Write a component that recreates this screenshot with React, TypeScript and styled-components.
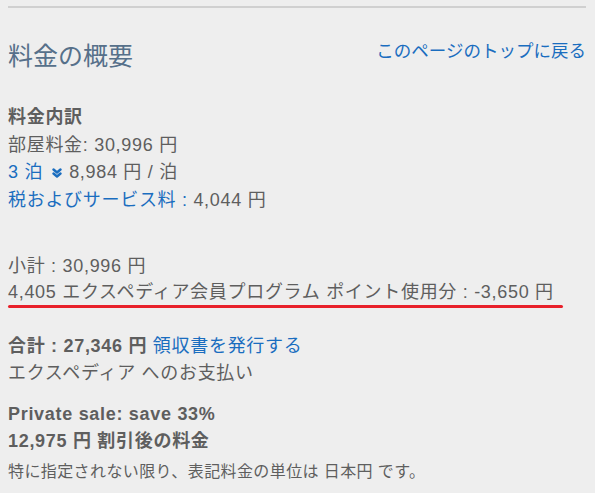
import React from 'react'
import styled, { createGlobalStyle } from 'styled-components'

const GlobalStyle = createGlobalStyle`
  body {
    margin: 0;
    background: #eeeeee;
    font-family: 'Liberation Sans', 'Noto Sans CJK JP', sans-serif;
    color: #5e5e5e;
  }
`

const Page = styled.div`
  padding: 0 9px 0 8px;
`

const Rule = styled.hr`
  margin: 6px 0 0;
  border: 0;
  border-top: 2px solid #d0d0d0;
`

const Header = styled.div`
  display: flex;
  justify-content: space-between;
  align-items: flex-start;
  margin-top: 33px;
`

const Title = styled.h2`
  margin: 0;
  font-size: 25px;
  line-height: 30px;
  font-weight: normal;
  color: #56708a;
`

const Link = styled.a<{ $size?: number }>`
  color: #1a6dbf;
  text-decoration: none;
  cursor: pointer;
  font-size: ${(p) => (p.$size ? `${p.$size}px` : 'inherit')};
`

const TopLink = styled(Link)`
  line-height: 20px;
`

const Block = styled.div<{ $gap: number; $lh?: number }>`
  margin-top: ${(p) => p.$gap}px;
  font-size: 18px;
  letter-spacing: 0.7px;
  line-height: ${(p) => p.$lh ?? 27}px;
`

const Line = styled.div<{ $bold?: boolean }>`
  font-weight: ${(p) => (p.$bold ? 'bold' : 'normal')};
  white-space: nowrap;
`

const MarkedLine = styled(Line)`
  position: relative;
  &::after {
    content: '';
    position: absolute;
    left: 0;
    bottom: -3px;
    width: 555px;
    height: 3.5px;
    border-radius: 2px;
    background: #e8202a;
  }
`

const Toggle = styled.span`
  display: inline-flex;
  vertical-align: middle;
  margin: -1px 7px 0 9px;
`

const Note = styled.p`
  margin: 5px 0 0;
  font-size: 16px;
  letter-spacing: 0.4px;
  line-height: 24px;
`

const ChevronsDown: React.FC = () => (
  <svg width="10" height="10" viewBox="0 0 10 10" fill="none">
    <path d="M1.5 1.5 L5 4.5 L8.5 1.5 M1.5 5.5 L5 8.5 L8.5 5.5" stroke="#1a6dbf" strokeWidth="2.4" strokeLinecap="round" strokeLinejoin="round" />
  </svg>
)

const App: React.FC = () => {
  return (
    <>
      <GlobalStyle />
      <Page>
        <Rule />
        <Header>
          <Title>料金の概要</Title>
          <TopLink $size={17.5}>このページのトップに戻る</TopLink>
        </Header>

        <Block $gap={33} $lh={27.5}>
          <Line $bold>料金内訳</Line>
          <Line>部屋料金: 30,996 円</Line>
          <Line>
            <Link>3 泊</Link>
            <Toggle>
              <ChevronsDown />
            </Toggle>
            8,984 円 / 泊
          </Line>
          <Line>
            <Link>税およびサービス料 :</Link> 4,044 円
          </Line>
        </Block>

        <Block $gap={39} $lh={26}>
          <Line>小計 : 30,996 円</Line>
          <MarkedLine>4,405 エクスペディア会員プログラム ポイント使用分 : -3,650 円</MarkedLine>
        </Block>

        <Block $gap={28}>
          <Line>
            <b>合計 : 27,346 円</b> <Link>領収書を発行する</Link>
          </Line>
          <Line>エクスペディア へのお支払い</Line>
        </Block>

        <Block $gap={14}>
          <Line $bold>Private sale: save 33%</Line>
          <Line $bold>12,975 円 割引後の料金</Line>
        </Block>

        <Note>特に指定されない限り、表記料金の単位は 日本円 です。</Note>
      </Page>
    </>
  )
}

export default App
